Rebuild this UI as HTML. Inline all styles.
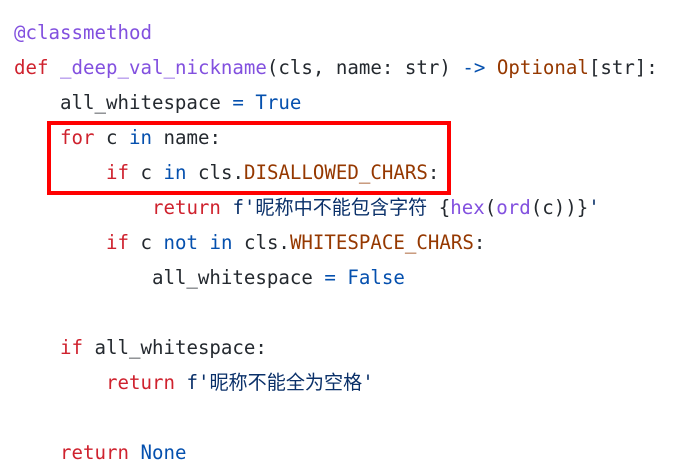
<html><head><style>
body{margin:0;background:#fff;width:690px;height:470px;overflow:hidden;position:relative}
pre{margin:0;position:absolute;left:14px;top:15px;font-family:"DejaVu Sans Mono","Noto Sans CJK SC",monospace;font-size:19.1px;line-height:35px;color:#24292f}
.k{color:#cf222e}.b{color:#0550ae}.p{color:#8250df}.o{color:#953800}.s{color:#0a3069}
.box{position:absolute;left:47px;top:121px;width:396px;height:66px;border:4px solid #f00}
</style></head><body>
<pre><span class="p">@classmethod</span>
<span class="k">def</span> <span class="p">_deep_val_nickname</span>(cls, name: str) <span class="b">-&gt;</span> <span class="o">Optional</span>[str]:
    all_whitespace <span class="b">=</span> <span class="b">True</span>
    <span class="k">for</span> c <span class="b">in</span> name:
        <span class="k">if</span> c <span class="b">in</span> cls.<span class="o">DISALLOWED_CHARS</span>:
            <span class="k">return</span> <span class="s">f'昵称中不能包含字符 </span>{<span class="p">hex</span>(<span class="p">ord</span>(c))}<span class="s">'</span>
        <span class="k">if</span> c <span class="b">not in</span> cls.<span class="o">WHITESPACE_CHARS</span>:
            all_whitespace <span class="b">=</span> <span class="b">False</span>

    <span class="k">if</span> all_whitespace:
        <span class="k">return</span> <span class="s">f'昵称不能全为空格'</span>

    <span class="k">return</span> <span class="b">None</span></pre>
<div class="box"></div>
</body></html>
